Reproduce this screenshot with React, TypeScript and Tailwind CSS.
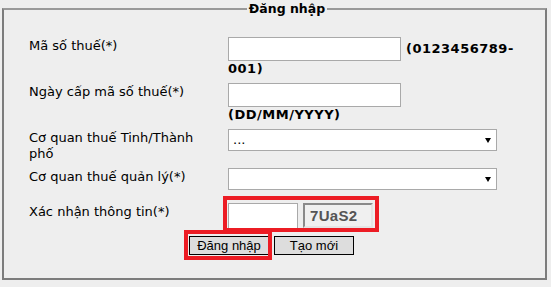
export default function App() {
  const label = "w-[199px] shrink-0 pr-6 pt-px";
  const box = "bg-white border border-[#a9a9a9] outline-none";

  return (
    <div className="w-[551px] h-[287px] bg-[#eeeeee] pt-px pl-[2px] font-['DejaVu_Sans',sans-serif] text-[13px] leading-4 text-black">
      <fieldset className="w-[545px] h-[279px] border-2 border-[#7c7c7c] border-t-[#999999] pl-[25px] pt-5">
        <legend className="mx-auto px-[2px] text-[12.5px] font-bold leading-4">Đăng nhập</legend>

        {/* Mã số thuế */}
        <div className="flex">
          <div className={label}>Mã số thuế(*)</div>
          <div>
            <div className="flex items-center gap-[5px]">
              <input className={`w-[173px] h-6 ${box}`} />
              <span className="font-bold tracking-[0.5px]">(0123456789-</span>
            </div>
            <div className="font-bold tracking-[0.5px]">001)</div>
          </div>
        </div>

        {/* Ngày cấp */}
        <div className="flex mt-[6px]">
          <div className={label}>Ngày cấp mã số thuế(*)</div>
          <div>
            <input className={`w-[173px] h-6 ${box}`} />
            <div className="font-bold tracking-[0.5px]">(DD/MM/YYYY)</div>
          </div>
        </div>

        {/* Cơ quan thuế tỉnh */}
        <div className="flex mt-[6px]">
          <div className={label}>Cơ quan thuế Tinh/Thành phố</div>
          <div className="relative">
            <select className={`w-[269px] h-[22px] pl-[4px] appearance-none ${box}`}>
              <option>...</option>
            </select>
            <svg className="pointer-events-none absolute right-[6px] top-[9px]" width="6" height="5" viewBox="0 0 6 5">
              <polygon points="0,0 6,0 3,5" fill="#000" />
            </svg>
          </div>
        </div>

        {/* Cơ quan thuế quản lý */}
        <div className="flex mt-[6px]">
          <div className={label}>Cơ quan thuế quản lý(*)</div>
          <div className="relative">
            <select className={`w-[269px] h-[22px] pl-[4px] appearance-none ${box}`}>
              <option></option>
            </select>
            <svg className="pointer-events-none absolute right-[6px] top-[9px]" width="6" height="5" viewBox="0 0 6 5">
              <polygon points="0,0 6,0 3,5" fill="#000" />
            </svg>
          </div>
        </div>

        {/* Xác nhận */}
        <div className="flex mt-[13px]">
          <div className={label}>Xác nhận thông tin(*)</div>
          <div className="relative flex gap-[5px]">
            <input className={`w-[70px] h-[26px] ${box}`} />
            <div className="w-[70px] h-[25px] flex items-center pl-[5px] border-2 border-t-[#8a8a8a] border-l-[#8a8a8a] border-b-[#e4e4e4] border-r-[#e4e4e4] bg-[#f0f0f0] font-['Liberation_Sans',Arial,sans-serif] font-bold text-[15px] tracking-[0.3px] text-[#555]">
              7UaS2
            </div>
            <span className="pointer-events-none absolute left-[-5px] right-[-6px] top-[-7px] bottom-[-3px] border-4 border-[#ec1c24]" />
          </div>
        </div>

        {/* Buttons */}
        <div className="mt-[7px] ml-[160px] flex gap-[5px] font-['Liberation_Sans',Arial,sans-serif] text-[13px]">
          <div className="relative">
            <button className="block w-20 h-[19px] bg-[#dddddd] border border-black leading-none">Đăng nhập</button>
            <span className="pointer-events-none absolute left-[-5px] right-[-3px] top-[-6px] bottom-[-5px] border-4 border-[#ec1c24]" />
          </div>
          <button className="block w-20 h-[19px] bg-[#dddddd] border border-black leading-none">Tạo mới</button>
        </div>
      </fieldset>
    </div>
  );
}
